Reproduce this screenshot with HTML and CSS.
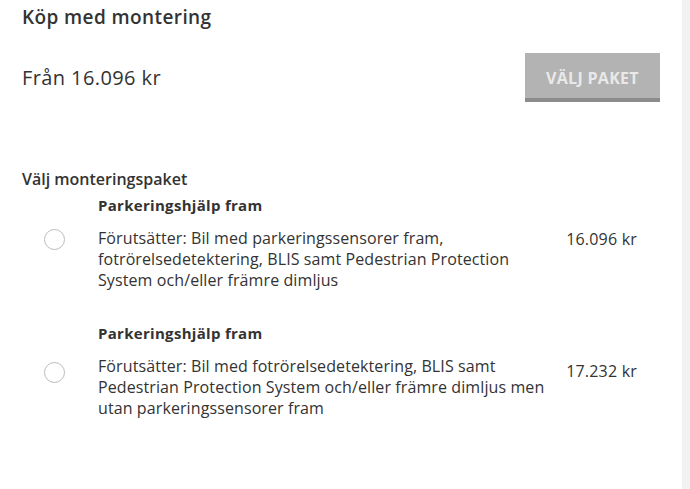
FILE: index.html
```html
<!DOCTYPE html>
<html lang="sv">
<head>
  <meta charset="UTF-8">
  <meta name="viewport" content="width=device-width, initial-scale=1.0">
  <title>Köp med montering</title>
  <link rel="stylesheet" href="styles.css">
</head>
<body>
  <div class="page">
    <div class="panel">
      <!-- Header -->
      <h2 class="panel-title">Köp med montering</h2>

      <div class="buy-row">
        <p class="from-price">Från 16.096 kr</p>
        <button class="choose-btn" type="button" disabled>Välj paket</button>
      </div>

      <!-- Packages -->
      <div class="packages">
        <h3 class="packages-title">Välj monteringspaket</h3>

        <div class="package">
          <div class="package-name">Parkeringshjälp fram</div>
          <label class="package-row">
            <span class="radio"></span>
            <span class="package-desc">Förutsätter: Bil med parkeringssensorer fram, fotrörelsedetektering, BLIS samt Pedestrian Protection System och/eller främre dimljus</span>
            <span class="package-price">16.096 kr</span>
          </label>
        </div>

        <div class="package package-low">
          <div class="package-name">Parkeringshjälp fram</div>
          <label class="package-row">
            <span class="radio"></span>
            <span class="package-desc">Förutsätter: Bil med fotrörelsedetektering, BLIS samt Pedestrian Protection System och/eller främre dimljus men utan parkeringssensorer fram</span>
            <span class="package-price">17.232 kr</span>
          </label>
        </div>
      </div>
    </div>
    <div class="side-strip"></div>
  </div>
</body>
</html>
```

FILE: styles.css
```css
/* Basic styles for the page */
body {
  font-family: "Open Sans", Arial, sans-serif;
  margin: 0;
  padding: 0;
  background-color: #fff;
  color: #333;
}

.page {
  display: flex;
  min-height: 489px;
}

.panel {
  flex: 1;
  padding: 0 22px;
}

.side-strip {
  width: 8px;
  background-color: #f2f2f2;
}

.panel-title {
  font-size: 19px;
  font-weight: 600;
  letter-spacing: 0.4px;
  margin: 5px 0 0;
  line-height: 24px;
  color: #333;
}

.buy-row {
  display: flex;
  justify-content: space-between;
  align-items: center;
  margin-top: 24px;
}

.from-price {
  margin: 0;
  font-size: 20px;
  letter-spacing: 0.4px;
  color: #333;
}

.choose-btn {
  width: 135px;
  height: 49px;
  background-color: #b3b3b3;
  border: none;
  border-bottom: 4px solid #8c8c8c;
  color: #e9e9e9;
  font-family: inherit;
  font-size: 16px;
  font-weight: 700;
  letter-spacing: 0.3px;
  text-transform: uppercase;
  padding: 4px 0 0;
}

.packages {
  margin-top: 66px;
}

.packages-title {
  font-size: 16px;
  font-weight: 600;
  margin: 0;
  line-height: 22px;
}

.package {
  margin-bottom: 32px;
  padding-right: 23px;
}

.package-name {
  font-size: 15px;
  font-weight: 700;
  letter-spacing: 0.3px;
  margin: 5px 0 0 76px;
  line-height: 20px;
}

.package-row {
  display: flex;
  align-items: flex-start;
  margin-top: 13px;
}

.radio {
  width: 19px;
  height: 19px;
  border: 1.5px solid #bbb;
  border-radius: 50%;
  margin: 1px 33px 0 22px;
  flex-shrink: 0;
}

.package-desc {
  width: 462px;
  font-size: 16px;
  line-height: 21px;
  letter-spacing: 0.1px;
  color: #333;
}

.package-price {
  flex: 1;
  text-align: right;
  font-size: 16px;
  line-height: 21px;
  letter-spacing: 0.2px;
  margin-top: 1px;
}

.package-low .radio {
  margin-top: 6px;
}

.package-low .package-price {
  margin-top: 5px;
}
```
